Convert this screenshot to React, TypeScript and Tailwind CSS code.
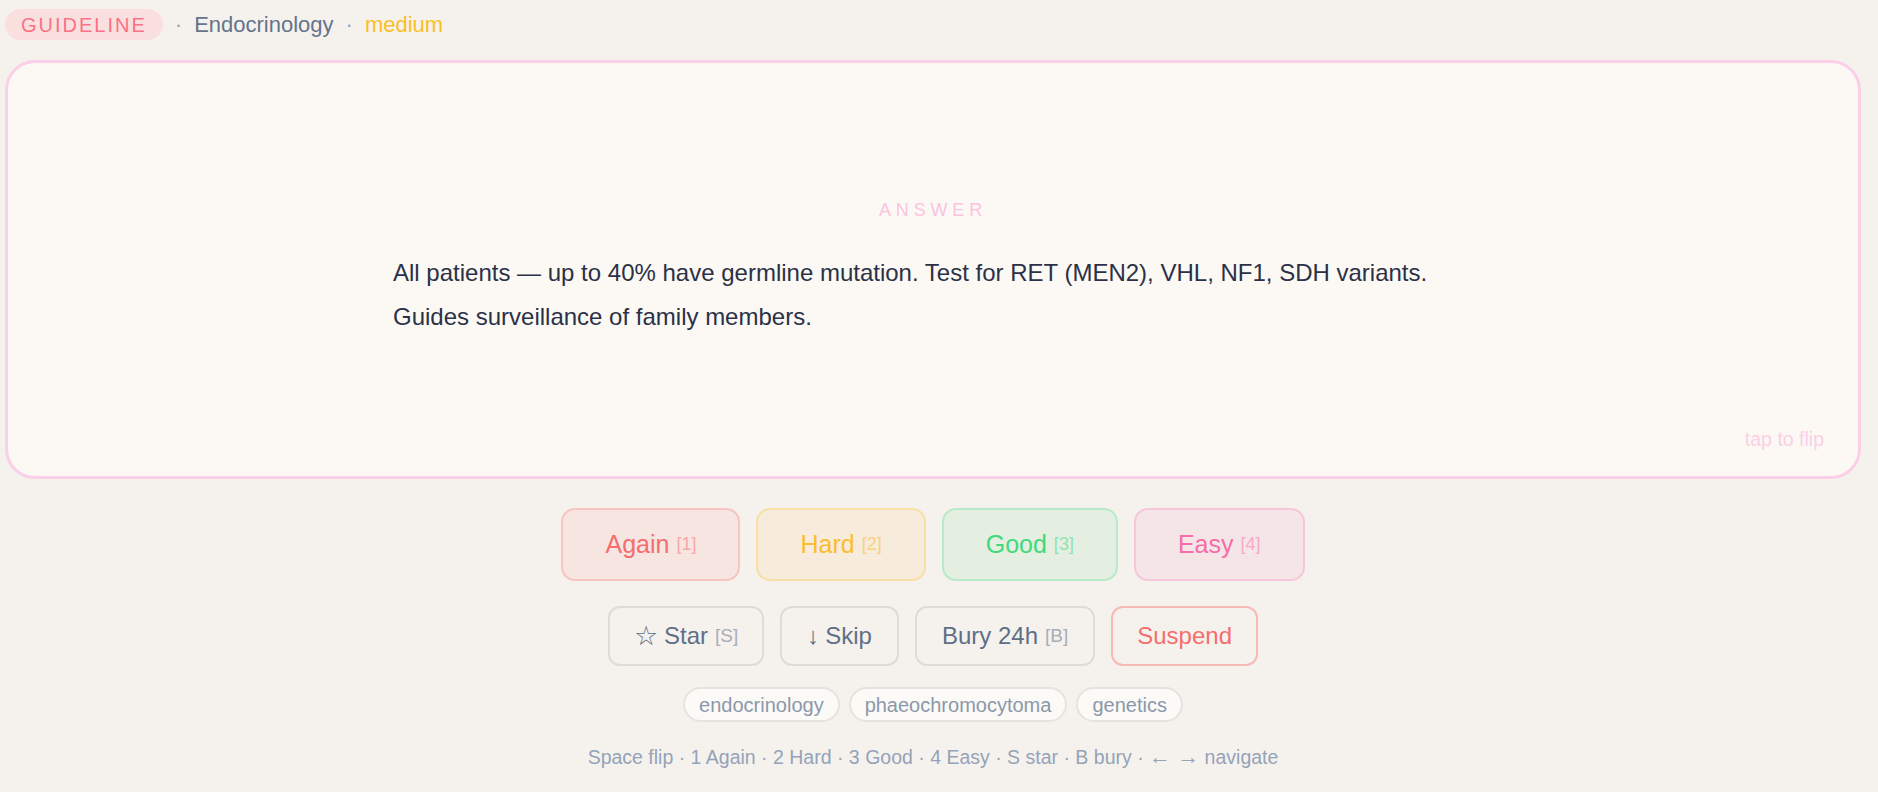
import React from 'react';

const ratings = [
  { label: 'Again', hotkey: '1', cls: 'bg-[#f7e5e2] border-[#f8c4c0] text-[#f56d6d]', hint: 'text-[#f9a8a5]' },
  { label: 'Hard', hotkey: '2', cls: 'bg-[#f7ecdb] border-[#f8dfa4] text-[#fbbd2f]', hint: 'text-[#fad27c]' },
  { label: 'Good', hotkey: '3', cls: 'bg-[#e4efe2] border-[#b7eac8] text-[#42d97d]', hint: 'text-[#8fe4ae]' },
  { label: 'Easy', hotkey: '4', cls: 'bg-[#f6e5e6] border-[#f6c7da] text-[#f56ea9]', hint: 'text-[#f5aacb]' },
];

const tags = ['endocrinology', 'phaeochromocytoma', 'genetics'];

export default function App() {
  return (
    <div className="min-h-screen bg-[#f5f2ee] pl-[5px] pr-[17px] pt-[9px] font-['Liberation_Sans',Arial,sans-serif]">
      {/* header */}
      <div className="flex items-center gap-3 text-[22px] leading-none">
        <span className="flex h-[31px] items-center rounded-full bg-[#f9e0df] px-[16px] text-[20px] tracking-[0.1em] text-[#fb7185]">
          GUIDELINE
        </span>
        <span className="text-[#94a3b8]">·</span>
        <span className="text-[#64748b]">Endocrinology</span>
        <span className="text-[#94a3b8]">·</span>
        <span className="text-[#fbbf24]">medium</span>
      </div>

      {/* card */}
      <div className="relative mt-[20px] flex h-[419px] flex-col justify-center rounded-[30px] border-[3px] border-[#fbcfe8] bg-[#fcf9f5] pb-[2px]">
        <div className="text-center text-[18px] leading-[24px] tracking-[0.27em] text-[#fbc3de]">ANSWER</div>
        <p className="mx-auto mt-[29px] w-full max-w-[1080px] text-[24px] leading-[44px] text-[#2b3146]">
          All patients — up to 40% have germline mutation. Test for RET (MEN2), VHL, NF1, SDH variants. Guides surveillance of family members.
        </p>
        <span className="absolute bottom-[25px] right-[34px] text-[19.5px] leading-[24px] text-[#fbd0e6]">tap to flip</span>
      </div>

      {/* rating buttons */}
      <div className="mt-[29px] flex justify-center gap-4">
        {ratings.map((r) => (
          <button
            key={r.label}
            className={`flex h-[73px] items-center justify-center rounded-[14px] border-2 px-[42px] text-[25px] ${r.cls}`}
          >
            {r.label} <span className={`ml-[7px] text-[18px] ${r.hint}`}>[{r.hotkey}]</span>
          </button>
        ))}
      </div>

      {/* secondary actions */}
      <div className="mt-[25px] flex justify-center gap-4 text-[24px] text-[#5f6f87]">
        <button className="flex h-[60px] items-center rounded-[12px] border-2 border-[#dfdbd6] px-[24px]">
          <span className="mr-[6px] text-[27px] leading-none">☆</span>Star{' '}
          <span className="ml-[7px] text-[19px] text-[#a9aeb6]">[S]</span>
        </button>
        <button className="flex h-[60px] items-center rounded-[12px] border-2 border-[#dfdbd6] px-[25px]">
          <span className="mr-[6px]">↓</span>Skip
        </button>
        <button className="flex h-[60px] items-center rounded-[12px] border-2 border-[#dfdbd6] px-[25px]">
          Bury 24h <span className="ml-[7px] text-[19px] text-[#a9aeb6]">[B]</span>
        </button>
        <button className="flex h-[60px] items-center rounded-[12px] border-2 border-[#f7b9b4] px-[24px] text-[#f56d6d]">
          Suspend
        </button>
      </div>

      {/* tags */}
      <div className="mt-[21px] flex justify-center gap-[9px]">
        {tags.map((t) => (
          <span
            key={t}
            className="flex h-[35px] items-center rounded-full border-2 border-[#e6e2dd] bg-[#fcfaf7] px-[14px] text-[20px] text-[#8b98ab]"
          >
            {t}
          </span>
        ))}
      </div>

      {/* shortcuts */}
      <div className="mt-[22px] text-center text-[19.5px] leading-[26px] text-[#94a3b8]">
        Space flip · 1 Again · 2 Hard · 3 Good · 4 Easy · S star · B bury · <span className="text-[22px]">← →</span> navigate
      </div>
    </div>
  );
}
